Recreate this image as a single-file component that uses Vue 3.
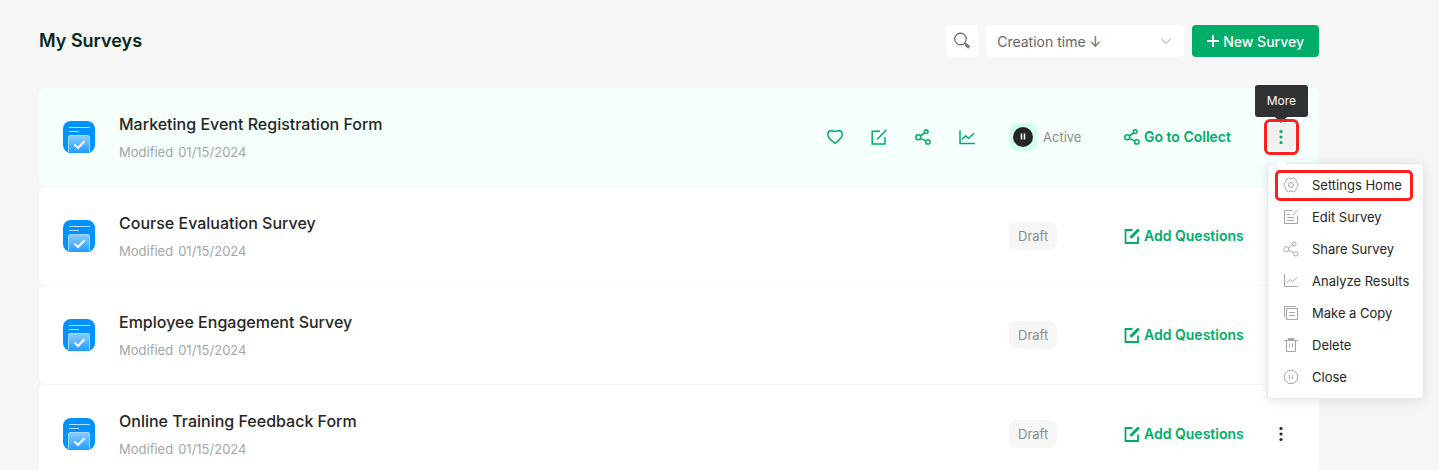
<script setup>
import { ref } from 'vue'

const sort = ref('created')

const surveys = [
  { id: 1, name: 'Marketing Event Registration Form', date: '01/15/2024', active: true },
  { id: 2, name: 'Course Evaluation Survey', date: '01/15/2024', active: false },
  { id: 3, name: 'Employee Engagement Survey', date: '01/15/2024', active: false },
  { id: 4, name: 'Online Training Feedback Form', date: '01/15/2024', active: false },
]

const icons = {
  heart: 'M8 14.2C5 12 .8 9 .8 5.400C.8 3.100 2.300 1.700 4.300 1.700C5.900 1.700 7.200 2.100 8 2.300C8.800 2.100 10.100 1.700 11.700 1.700C13.700 1.700 15.200 3.100 15.200 5.400C15.200 9 11 12 8 14.200Z',
  edit: 'M9 2.200H1.200V15H14V8M15.400 .8L6 10.400',
  pen: 'M8.500 2H1.500V15H14V8.500',
  share: 'M5.500 7.100L9.600 3.600M5.600 9.300L10.700 11.800M.8 8.200a2.500 2.500 0 1 0 5 0a2.500 2.500 0 1 0 -5 0M9.300 2.700a1.900 1.900 0 1 0 3.800 0a1.900 1.900 0 1 0 -3.800 0M10.700 12.900a2.200 2.200 0 1 0 4.400 0a2.200 2.200 0 1 0 -4.400 0',
  chart: 'M1 1.500V14.500H16M3 10.500L6.500 6.800L9.500 9.300L15 4.200',
}

const quickActions = [
  { label: 'Favorite', icon: 'heart' },
  { label: 'Edit', icon: 'edit' },
  { label: 'Share', icon: 'share' },
  { label: 'Analyze', icon: 'chart' },
]

const menu = [
  {
    label: 'Settings Home',
    marked: true,
    path: 'M5.500 1Q8 3.400 10.500 1L13 2.500Q12.300 5.300 14.800 6.300V9.700Q12.300 10.700 13 13.500L10.500 15Q8 12.600 5.500 15L3 13.500Q3.700 10.700 1.200 9.700V6.300Q3.700 5.300 3 2.500ZM5.500 8a2.500 2.500 0 1 0 5 0a2.500 2.500 0 1 0 -5 0',
  },
  { label: 'Edit Survey', path: 'M9.500 1.500H1.500V14.500H14.500V6.500M14.500 1L9.500 6.500M4 5.500H7M4 8.500H11M4 11.500H11' },
  { label: 'Share Survey', path: icons.share },
  { label: 'Analyze Results', path: 'M1.500 1V13.500H15M3.500 10L7 6.500L9.500 8.500L14 4.500' },
  { label: 'Make a Copy', path: 'M1.500 12V1.500H13M3.500 3.500H14.500V14.500H3.500ZM6 7.500H12M6 10.500H12' },
  { label: 'Delete', path: 'M1 3.500H15M5 2.500V1.500H11V2.500ZM3.500 3.500V14.500H12.500V3.500M6.500 6.500V10.500M9.500 6.500V10.500' },
  { label: 'Close', path: 'M1.300 8a6.700 6.700 0 1 0 13.400 0a6.700 6.700 0 1 0 -13.400 0M6.500 6V10M9.500 6V10' },
]
</script>

<template>
  <main class="page">
    <header class="head">
      <h1>My Surveys</h1>
      <div class="tools">
        <button class="search" type="button" aria-label="Search">
          <svg width="18" height="18" viewBox="0 0 18 18" fill="none" stroke="#666">
            <circle cx="7.500" cy="7" r="5.800" stroke-width="1.200" />
            <path d="M11.500 11.200L13 12.600" stroke-width="1.300" />
            <path d="M12.600 12.300L16.200 15.600" stroke-width="3" />
            <path d="M13.200 12.800L15.700 15.100" stroke="#bbb" stroke-width=".8" />
          </svg>
        </button>
        <div class="sort">
          <select v-model="sort" aria-label="Sort surveys">
            <option value="created">Creation time ↓</option>
            <option value="modified">Modified time ↓</option>
          </select>
          <svg class="chevron" width="12" height="8" viewBox="0 0 12 8" fill="none" stroke="#bfc3c1" stroke-width="1.200"><path d="M1 1.300L6 6.500L11 1.300" /></svg>
        </div>
        <button class="new" type="button">
          <svg width="12" height="12" viewBox="0 0 12 12" stroke="#fff" stroke-width="2"><path d="M6 0V12M0 6H12" /></svg>
          New Survey
        </button>
      </div>
    </header>

    <ul class="list">
      <li v-for="s in surveys" :key="s.id" class="row" :class="{ current: s.active }">
        <svg class="logo" width="32" height="32" viewBox="0 0 32 32" fill="none">
          <defs>
            <linearGradient :id="'card' + s.id" x1="0" y1="0" x2="0" y2="1">
              <stop offset="0" stop-color="#8cccff" />
              <stop offset="1" stop-color="#1f9cff" />
            </linearGradient>
          </defs>
          <rect width="32" height="32" rx="8" fill="#0092ff" />
          <path d="M6 6.500H27M6 10.500H16" stroke="#b5dfff" />
          <path d="M5.500 32V16a1.500 1.500 0 0 1 1.500 -1.500H25a1.500 1.500 0 0 1 1.500 1.500V32Z" :fill="'url(#card' + s.id + ')'" />
          <path d="M5.500 31V16a1.500 1.500 0 0 1 1.500 -1.500H25a1.500 1.500 0 0 1 1.500 1.500V31" stroke="#a4d8ff" />
          <path d="M11.500 23.500L15 27L21.500 20.300" stroke="#fff" stroke-width="2" />
        </svg>
        <div class="info">
          <h2>{{ s.name }}</h2>
          <p><span>Modified</span><time>{{ s.date }}</time></p>
        </div>
        <div v-if="s.active" class="quick">
          <button v-for="a in quickActions" :key="a.label" type="button" :aria-label="a.label">
            <svg width="16" height="16" viewBox="0 0 16 16" fill="none" stroke="currentColor" stroke-width="1.500"><path :d="icons[a.icon]" /></svg>
          </button>
        </div>
        <div class="status">
          <template v-if="s.active">
            <button class="pause" type="button" aria-label="Pause">
              <svg width="20" height="20" viewBox="0 0 20 20"><circle cx="10" cy="10" r="10" fill="#262626" /><path d="M8.500 6.500V12.500M11.500 6.500V12.500" stroke="#fff" stroke-width="1.500" /></svg>
            </button>
            <span class="live">Active</span>
          </template>
          <span v-else class="draft">Draft</span>
        </div>
        <a class="action" href="#">
          <svg width="16" height="16" viewBox="0 0 16 16" fill="none" stroke="currentColor">
            <path :d="s.active ? icons.share : icons.pen" :stroke-width="s.active ? 1.5 : 1.8" />
            <path v-if="!s.active" d="M14.800 1.500L6.500 9.800" stroke-width="3" />
          </svg>
          {{ s.active ? 'Go to Collect' : 'Add Questions' }}
        </a>
        <div class="more-wrap">
          <button class="more" type="button" aria-label="More">
            <svg width="4" height="16" viewBox="0 0 4 16" fill="currentColor"><circle cx="2" cy="2.500" r="1.600" /><circle cx="2" cy="8" r="1.600" /><circle cx="2" cy="13.500" r="1.600" /></svg>
          </button>
          <template v-if="s.active">
            <div class="tooltip" role="tooltip">More</div>
            <div class="menu" role="menu">
              <button v-for="m in menu" :key="m.label" class="item" :class="{ marked: m.marked }" type="button" role="menuitem">
                <svg width="16" height="16" viewBox="0 0 16 16" fill="none" stroke="#a6a6a6"><path :d="m.path" /></svg>
                {{ m.label }}
              </button>
            </div>
          </template>
        </div>
      </li>
    </ul>
  </main>
</template>

<style>
html {
  scrollbar-width: none;
}
body {
  margin: 0;
  background: #f6f6f6;
}
</style>

<style scoped>
.page {
  padding: 25px 120px 0 39px;
  font-family: Inter, "Liberation Sans", sans-serif;
  font-size: 14px;
  color: #262626;
}
h1,
h2,
p,
ul {
  margin: 0;
  padding: 0;
}
button {
  border: 0;
  padding: 0;
  background: none;
  font: inherit;
  color: inherit;
  cursor: pointer;
}
svg {
  display: block;
  flex: none;
}
.head {
  display: flex;
  align-items: center;
  justify-content: space-between;
  height: 32px;
  margin-bottom: 31px;
}
h1 {
  font-size: 18px;
  line-height: 34px;
  font-weight: 600;
  color: #05291b;
}
.tools {
  display: flex;
  gap: 8px;
}
.search {
  display: grid;
  place-items: center;
  width: 32px;
  height: 32px;
  border-radius: 4px;
  background: #fff;
}
.sort {
  position: relative;
  width: 198px;
}
select {
  appearance: none;
  width: 100%;
  height: 32px;
  padding: 0 32px 0 11px;
  border: 0;
  border-radius: 4px;
  background: #fff;
  font: inherit;
  color: #666;
}
.chevron {
  position: absolute;
  top: 12px;
  right: 12px;
  pointer-events: none;
}
.new {
  display: flex;
  align-items: center;
  gap: 4px;
  height: 32px;
  padding: 0 15px;
  border-radius: 4px;
  background: #00ad68;
  color: #fff;
  font-weight: 500;
}
.list {
  display: flex;
  flex-direction: column;
  gap: 1px;
  list-style: none;
}
.row {
  display: flex;
  align-items: center;
  padding: 24px;
  border-radius: 6px;
  background: #fff;
}
.row.current {
  background: #f5fffc;
}
.info {
  flex: 1;
  margin-left: 24px;
}
h2 {
  font-size: 16px;
  line-height: 24px;
  font-weight: 500;
}
.info p {
  display: flex;
  gap: 5px;
  margin-top: 6px;
  font-size: 13px;
  line-height: 20px;
  color: #a6a6a6;
}
.quick {
  display: flex;
  gap: 28px;
  margin-right: 34px;
  color: #00ad68;
}
.status {
  display: flex;
  align-items: center;
  gap: 6px;
  width: 115px;
  font-size: 13px;
  line-height: 28px;
  color: #8c8c8c;
}
.pause {
  display: grid;
  place-items: center;
  width: 28px;
  height: 28px;
  border-radius: 8px;
  background: #d2fdef;
}
.draft {
  padding: 0 9px;
  border-radius: 8px;
  background: #f6f6f6;
}
.action {
  display: flex;
  align-items: center;
  gap: 4px;
  width: 143px;
  line-height: 20px;
  font-weight: 600;
  color: #00ad68;
  text-decoration: none;
  white-space: nowrap;
}
.more-wrap {
  position: relative;
}
.more {
  display: grid;
  place-items: center;
  position: relative;
  width: 28px;
  height: 28px;
  border-radius: 6px;
}
.current .more {
  background: #f0f0f0;
  color: #00ad68;
}
.current .more::after {
  content: "";
  position: absolute;
  z-index: 1;
  inset: -4px -4px -4px -3px;
  border: 3px solid #fd2020;
  border-radius: 6px;
}
.tooltip {
  position: absolute;
  right: -13px;
  bottom: 34px;
  padding: 0 12px;
  border-radius: 3px;
  background: #303133;
  color: #fff;
  font-size: 12px;
  line-height: 32px;
}
.tooltip::after {
  content: "";
  position: absolute;
  top: 100%;
  left: 50%;
  margin-left: -6px;
  border: 6px solid transparent;
  border-top-color: #303133;
  border-bottom: 0;
}
.menu {
  position: absolute;
  z-index: 2;
  top: 40px;
  left: 0;
  width: 157px;
  box-sizing: border-box;
  padding: 5px 0;
  border: 1px solid #e4e7ed;
  border-radius: 4px;
  background: #fff;
  box-shadow: 0 2px 12px rgba(0, 0, 0, 0.1);
}
.menu::before {
  content: "";
  position: absolute;
  bottom: 100%;
  left: 7px;
  border: 6px solid transparent;
  border-bottom-color: #fff;
  border-top: 0;
}
.item {
  position: relative;
  display: flex;
  align-items: center;
  gap: 13px;
  width: 100%;
  padding-left: 15px;
  font-size: 13px;
  line-height: 32px;
  white-space: nowrap;
}
.marked::after {
  content: "";
  position: absolute;
  inset: 1px 10px 0 7px;
  border: 3px solid #fd2020;
  border-radius: 5px;
}
</style>
